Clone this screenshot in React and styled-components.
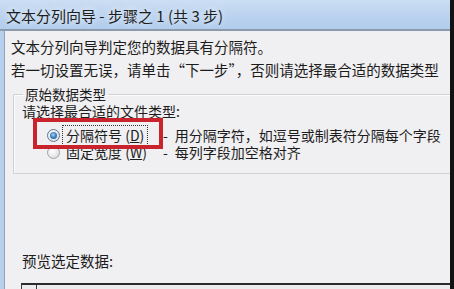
import React from 'react';
import styled, { createGlobalStyle } from 'styled-components';

const Global = createGlobalStyle`
  html, body { margin: 0; padding: 0; background: #f0eff1; }
  body { font-family: "Noto Sans CJK SC", "Microsoft YaHei", sans-serif; color: #1c1c1c; }
  * { box-sizing: border-box; }
`;

const Screen = styled.div`
  width: 454px;
  height: 289px;
  display: flex;
  overflow: hidden;
  background: #f0eff1;
`;

const Window = styled.div`
  flex: 1;
  min-width: 0;
  display: flex;
  flex-direction: column;
`;

const Edge = styled.div`
  width: 4px;
  flex: none;
  background: #121212;
`;

const TitleBar = styled.div`
  height: 31px;
  flex: none;
  display: flex;
  align-items: center;
  padding: 1px 0 0 6px;
  background: linear-gradient(#cbdef3, #b7d0ee 70%, #b2ccec);
  border-bottom: 2px solid #8c9aae;
  font-size: 15px;
  color: #1e1e1e;
  white-space: nowrap;
  text-shadow: 0 0 6px rgba(255, 255, 255, 0.95);
`;

const Body = styled.div`
  flex: 1;
  display: flex;
  border-left: 4px solid #b6cfec;
  min-height: 0;
`;

const Content = styled.div`
  flex: 1;
  position: relative;
  display: flex;
  flex-direction: column;
  border-left: 1px solid #97a3b4;
  padding: 4px 0 0 6px;
  background: #f0eff1;
  min-width: 0;
`;

const Intro = styled.p`
  margin: 0;
  font-size: 14.5px;
  line-height: 23px;
  white-space: nowrap;
`;

const GroupBox = styled.fieldset`
  margin: 4px 0 0 2px;
  padding: 0 0 12px 8px;
  border: 1px solid #d2d1d5;
  border-right: none;
  box-shadow: inset 1px 1px 0 #fbfbfc;
  min-width: 0;
`;

const Legend = styled.legend`
  margin-left: 1px;
  padding: 0 2px;
  font-size: 13.5px;
  line-height: 18px;
  white-space: nowrap;
`;

const Prompt = styled.div`
  font-size: 14px;
  line-height: 16px;
  white-space: nowrap;
`;

const Options = styled.div`
  margin-top: 8px;
  display: flex;
  flex-direction: column;
`;

const OptionRow = styled.label`
  display: grid;
  grid-template-columns: 13px 95px auto;
  column-gap: 4px;
  align-items: center;
  height: 17px;
  margin-left: 25px;
  font-size: 14px;
  line-height: 17px;
  white-space: nowrap;
`;

const Radio = styled.span`
  width: 13px;
  height: 13px;
  border-radius: 50%;
  border: 1px solid ${p => (p.$checked ? '#5d7893' : '#a3a3a6')};
  background: radial-gradient(circle at 40% 35%, #ffffff, #e2e2e4 70%, #cfcfd3);
  display: flex;
  align-items: center;
  justify-content: center;
  &::after {
    content: '';
    display: ${p => (p.$checked ? 'block' : 'none')};
    width: 7px;
    height: 7px;
    border-radius: 50%;
    background: radial-gradient(circle at 45% 40%, #a9d6f7, #3f86c6 45%, #1b4f85);
  }
`;

const OptionLabel = styled.span`
  justify-self: start;
  padding: 0 2px;
  outline: ${p => (p.$focused ? '1px dotted #333' : 'none')};
  outline-offset: 1px;
`;

const Description = styled.span``;

const Dash = styled.span`
  margin-right: 7px;
`;

const PreviewLabel = styled.div`
  margin: 78px 0 0 11px;
  font-size: 14.5px;
  line-height: 18px;
  white-space: nowrap;
`;

const PreviewBox = styled.div`
  margin: 13px 0 0 10px;
  flex: 1;
  display: flex;
  border-top: 2px solid #2c2c2e;
  border-left: 1px solid #3a3a3c;
  background: #ececee;
`;

const RowHeader = styled.div`
  width: 15px;
  border-right: 1px solid #3a3a3c;
`;

const Annotation = styled.div`
  position: absolute;
  left: 28px;
  top: 87px;
  width: 130px;
  height: 31px;
  border: 4px solid #c9232d;
  pointer-events: none;
`;

const options = [
  { key: 'D', name: '分隔符号', desc: '用分隔字符，如逗号或制表符分隔每个字段', checked: true },
  { key: 'W', name: '固定宽度', desc: '每列字段加空格对齐', checked: false },
];

export default function App() {
  return (
    <>
      <Global />
      <Screen>
        <Window>
          <TitleBar>文本分列向导 - 步骤之 1 (共 3 步)</TitleBar>
          <Body>
            <Content>
              <Intro>文本分列向导判定您的数据具有分隔符。</Intro>
              <Intro>若一切设置无误，请单击“下一步”，否则请选择最合适的数据类型</Intro>
              <GroupBox>
                <Legend>原始数据类型</Legend>
                <Prompt>请选择最合适的文件类型:</Prompt>
                <Options>
                  {options.map(o => (
                    <OptionRow key={o.key}>
                      <Radio $checked={o.checked} />
                      <OptionLabel $focused={o.checked}>
                        {o.name} (<u>{o.key}</u>)
                      </OptionLabel>
                      <Description>
                        <Dash>-</Dash>
                        {o.desc}
                      </Description>
                    </OptionRow>
                  ))}
                </Options>
              </GroupBox>
              <PreviewLabel>预览选定数据:</PreviewLabel>
              <PreviewBox>
                <RowHeader />
              </PreviewBox>
              <Annotation />
            </Content>
          </Body>
        </Window>
        <Edge />
      </Screen>
    </>
  );
}
